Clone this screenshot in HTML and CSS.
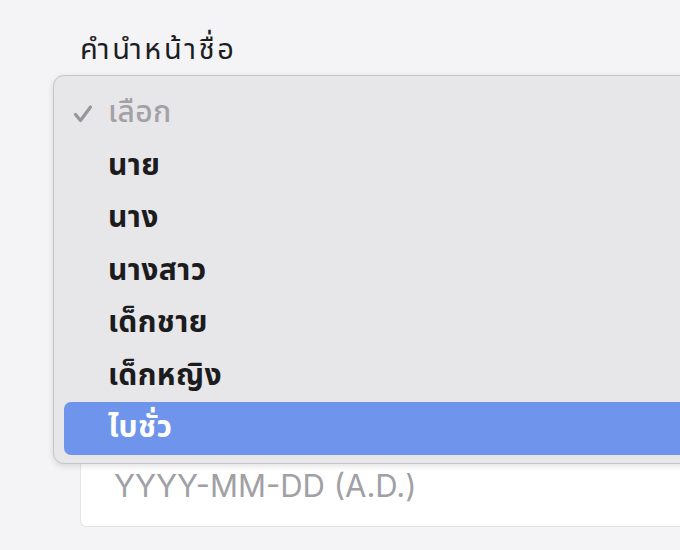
FILE: index.html
```html
<!DOCTYPE html>
<html lang="th">
<head>
<meta charset="utf-8">
<link rel="stylesheet" href="styles.css">
</head>
<body>
<div class="page">
  <div class="field">
    <div class="label">คำนำหน้าชื่อ</div>
    <div class="select-box"></div>
    <div class="date-input"><span class="placeholder">YYYY-MM-DD (A.D.)</span></div>
  </div>
  <div class="menu">
    <div class="item disabled">
      <svg class="check" width="20" height="20" viewBox="0 0 20 20"><path d="M2.5 10.5 L7.5 16.5 L17.5 3" fill="none" stroke="#97979b" stroke-width="3.2" stroke-linecap="round" stroke-linejoin="round"/></svg>
      เลือก
    </div>
    <div class="item">นาย</div>
    <div class="item">นาง</div>
    <div class="item">นางสาว</div>
    <div class="item">เด็กชาย</div>
    <div class="item">เด็กหญิง</div>
    <div class="item active">ไบชั่ว</div>
  </div>
</div>
</body>
</html>
```
FILE: styles.css
```css
html, body {
  margin: 0;
  padding: 0;
  background: #f4f4f6;
  overflow: hidden;
}
body {
  font-family: "Noto Sans Thai", "Noto Sans", "DejaVu Sans", sans-serif;
}
.page {
  position: relative;
  width: 680px;
  height: 550px;
}
.field {
  padding: 30px 0 0 80px;
  display: flex;
  flex-direction: column;
}
.label {
  font-size: 29px;
  line-height: 40px;
  letter-spacing: 2.6px;
  color: #1d1d1f;
}
.select-box {
  height: 60px;
  margin-top: 10px;
}
.date-input {
  margin-top: 307px;
  height: 78px;
  background: #ffffff;
  border: 1px solid #e4e4e8;
  border-right: none;
  border-radius: 6px 0 0 6px;
  display: flex;
  align-items: center;
  padding-left: 33px;
}
.placeholder {
  font-family: "Inter", "Noto Sans", sans-serif;
  font-size: 31px;
  color: #a0a0a5;
  margin-top: -4px;
}
.menu {
  position: absolute;
  left: 53px;
  top: 75px;
  width: 660px;
  height: 389px;
  box-sizing: border-box;
  background: #e7e7ea;
  border: 1px solid #c6c6ca;
  border-radius: 11px;
  box-shadow: 0 2px 6px rgba(0,0,0,0.12);
  padding: 11px 0 10px 10px;
  display: flex;
  flex-direction: column;
}
.item {
  height: 52.5px;
  flex: none;
  display: flex;
  align-items: center;
  padding-left: 44px;
  font-size: 30px;
  font-weight: 700;
  letter-spacing: 0.4px;
  color: #1c1c1e;
  border-radius: 7px;
  position: relative;
}
.item.disabled {
  color: #a2a2a6;
  font-weight: 500;
}
.check {
  position: absolute;
  left: 9px;
  top: 17px;
}
.item.active {
  background: #6e95eb;
  color: #ffffff;
}
```
